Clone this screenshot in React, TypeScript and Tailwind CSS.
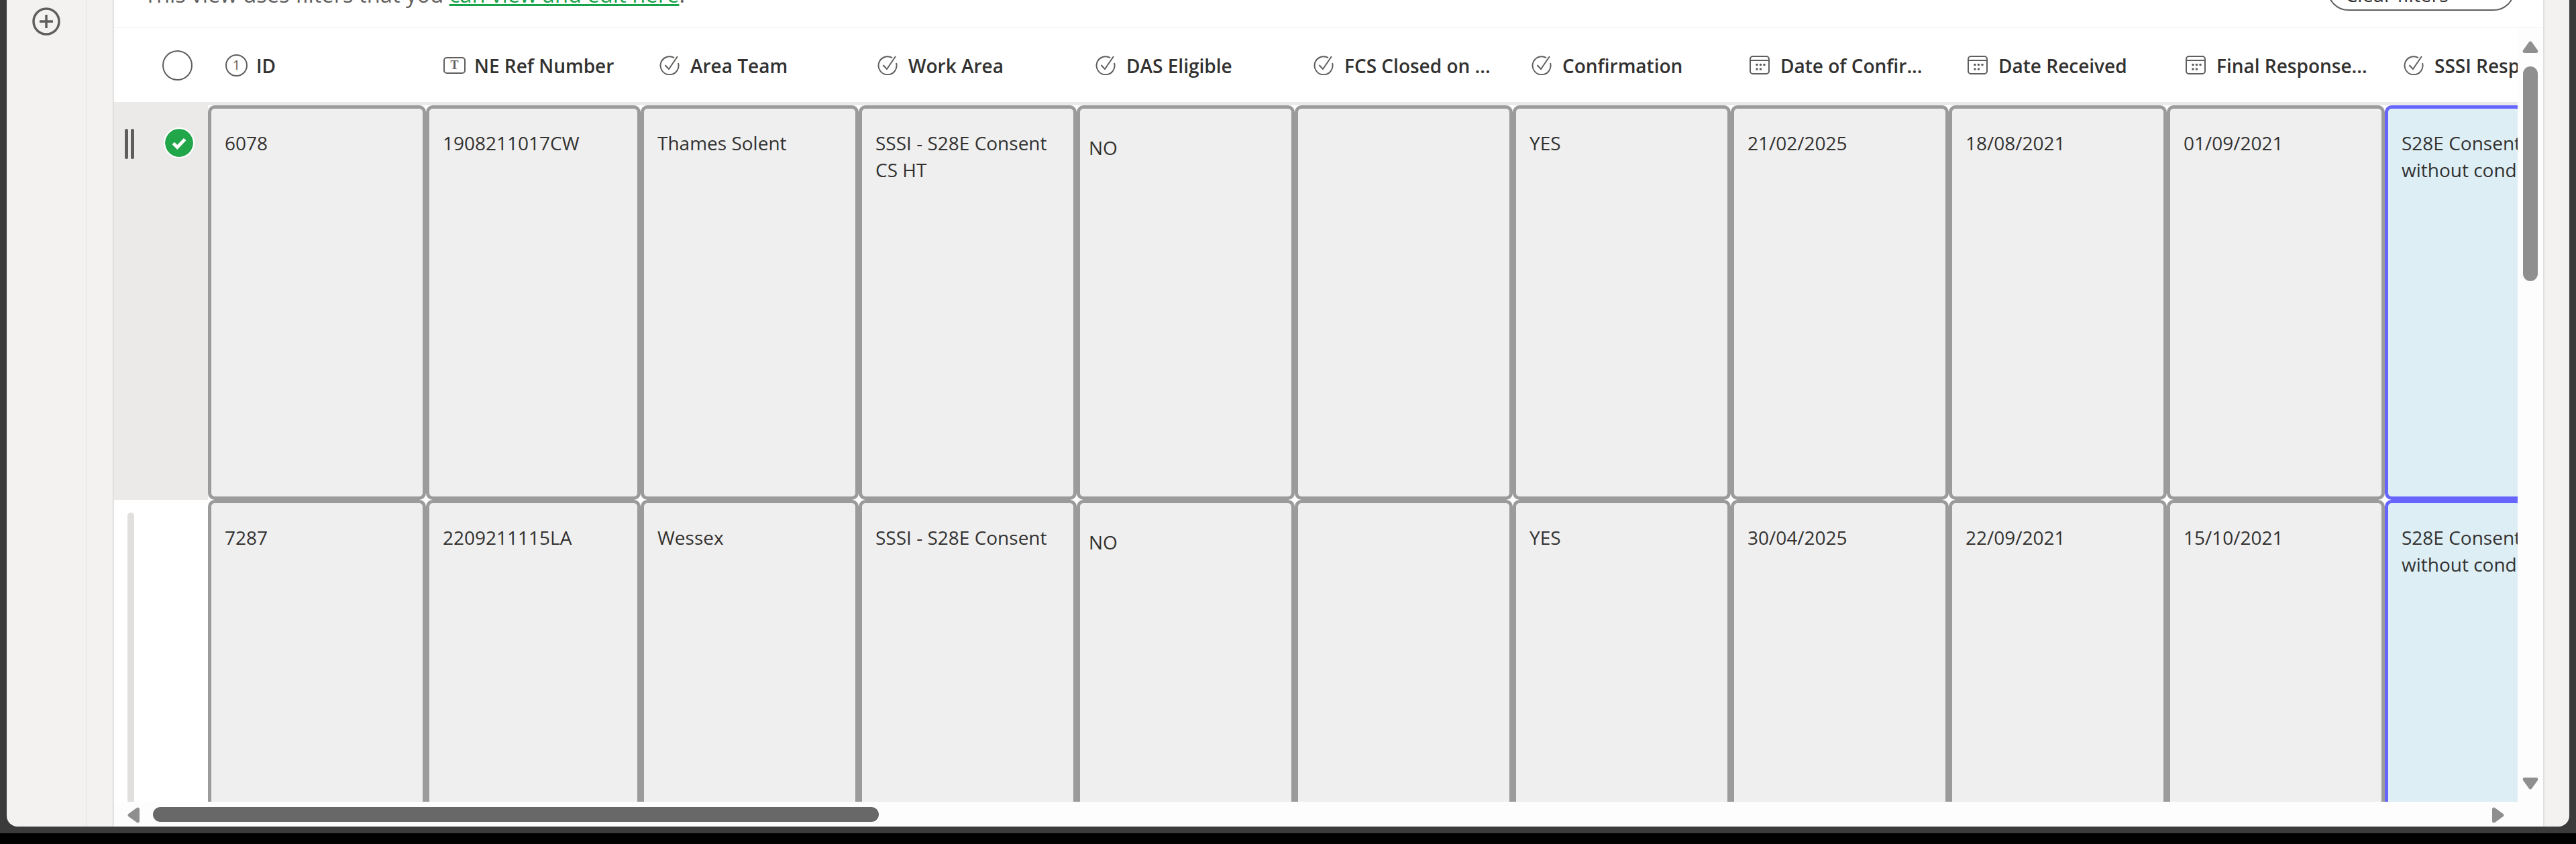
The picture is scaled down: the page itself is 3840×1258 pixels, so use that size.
const columns = [
  { label: "ID", icon: "number" },
  { label: "NE Ref Number", icon: "text" },
  { label: "Area Team", icon: "check" },
  { label: "Work Area", icon: "check" },
  { label: "DAS Eligible", icon: "check" },
  { label: "FCS Closed on ...", icon: "check" },
  { label: "Confirmation", icon: "check" },
  { label: "Date of Confir...", icon: "date" },
  { label: "Date Received", icon: "date" },
  { label: "Final Response...", icon: "date" },
  { label: "SSSI Response", icon: "check" },
];

const cellWidths = [
  "w-[325px]",
  "w-[320px]",
  "w-[325px]",
  "w-[325px]",
  "w-[325px]",
  "w-[325px]",
  "w-[325px]",
  "w-[325px]",
  "w-[325px]",
  "w-[325px]",
  "w-[325px]",
];

const rows = [
  ["6078", "1908211017CW", "Thames Solent", "SSSI - S28E Consent CS HT", "NO", "", "YES", "21/02/2025", "18/08/2021", "01/09/2021", "S28E Consent without conditions"],
  ["7287", "2209211115LA", "Wessex", "SSSI - S28E Consent", "NO", "", "YES", "30/04/2025", "22/09/2021", "15/10/2021", "S28E Consent without conditions"],
];

function ColumnIcon({ type }: { type: string }) {
  if (type === "number") {
    return (
      <span className="flex h-[33px] w-[33px] shrink-0 items-center justify-center rounded-full border-2 border-[#605e5c] text-[20px] font-normal leading-none text-[#605e5c]">
        1
      </span>
    );
  }
  if (type === "text") {
    return (
      <span className="flex h-[25px] w-[33px] shrink-0 items-center justify-center rounded-[5px] border-2 border-[#605e5c] font-['Liberation_Serif',serif] text-[18px] font-bold leading-none text-[#605e5c]">
        T
      </span>
    );
  }
  if (type === "date") {
    return (
      <svg viewBox="0 0 30 28" className="-ml-[3px] mr-[3px] h-[28px] w-[30px] shrink-0" fill="none" stroke="#605e5c" strokeWidth="2">
        <rect x="1" y="1" width="28" height="26" rx="4" />
        <path d="M1 7h28" />
        <g fill="#605e5c" stroke="none">
          <circle cx="11" cy="13.500" r="1.800" />
          <circle cx="16.500" cy="13.500" r="1.800" />
          <circle cx="22" cy="13.500" r="1.800" />
          <circle cx="11" cy="20" r="1.800" />
          <circle cx="16.500" cy="20" r="1.800" />
        </g>
      </svg>
    );
  }
  return (
    <svg viewBox="0 0 30 30" className="-ml-[3px] mr-[3px] h-[30px] w-[30px] shrink-0" fill="none" stroke="#605e5c" strokeWidth="2">
      <path d="M22 4.200A13.500 13.500 0 1 0 28 12" />
      <path d="M8.500 15l5.500 6L27 2" />
    </svg>
  );
}

function ArrowUp() {
  return (
    <svg viewBox="0 0 24 18" className="h-[18px] w-[24px]" fill="#8f8f8f">
      <path d="M10 1.500a2.500 2.500 0 0 1 4 0l9 12.500c1 1.500 0 4-2 4H3c-2 0-3-2.500-2-4z" />
    </svg>
  );
}

function ArrowDown() {
  return (
    <svg viewBox="0 0 24 18" className="h-[18px] w-[24px]" fill="#8f8f8f">
      <path d="M10 16.500a2.500 2.500 0 0 0 4 0l9-12.500c1-1.500 0-4-2-4H3C1 0 0 2.500 1 4z" />
    </svg>
  );
}

function ArrowLeft() {
  return (
    <svg viewBox="0 0 18 24" className="h-[24px] w-[18px]" fill="#8f8f8f">
      <path d="M1.500 10a2.500 2.500 0 0 0 0 4l12.500 9c1.500 1 4 0 4-2V3c0-2-2.500-3-4-2z" />
    </svg>
  );
}

function ArrowRight() {
  return (
    <svg viewBox="0 0 18 24" className="h-[24px] w-[18px]" fill="#8f8f8f">
      <path d="M16.500 10a2.500 2.500 0 0 1 0 4L4 23c-1.500 1-4 0-4-2V3c0-2 2.500-3 4-2z" />
    </svg>
  );
}

function Cell({ value, col }: { value: string; col: number }) {
  const isLast = col === 10;
  return (
    <div className={`${cellWidths[col]} h-full shrink-0 bg-white`}>
      <div
        className={`h-full rounded-[10px] border-[5px] ${
          isLast ? "border-[#6666ff] bg-[#ddeef5]" : "border-[#9b9b9b] bg-[#efefef]"
        } ${col === 4 ? "pl-[13px] pt-[38px]" : "pl-[20px] pt-[31px]"} pr-[14px] text-[28px] leading-[40px] text-[#323130]`}
      >
        {value}
      </div>
    </div>
  );
}

export default function App() {
  return (
    <div className="h-[1258px] w-[3840px] overflow-hidden bg-black font-['Open_Sans',sans-serif]">
      <div className="h-[1242px] bg-[#3b3b3b] px-[10px] pb-[10px]">
        <div className="flex h-full overflow-hidden rounded-b-[16px] bg-[#f3f2f1]">
          {/* Left rail */}
          <div className="flex w-[120px] shrink-0 justify-center border-r-2 border-[#ebeae9] pt-[11px]">
            <svg viewBox="0 0 42 42" className="h-[42px] w-[42px]" fill="none" stroke="#605e5c" strokeWidth="3.500">
              <circle cx="21" cy="21" r="19" />
              <path d="M21 11v20M11 21h20" />
            </svg>
          </div>
          <div className="w-[40px] shrink-0" />

          {/* Main panel */}
          <div className="flex w-[3621px] shrink-0 flex-col overflow-hidden bg-white shadow-[0_0_4px_rgba(0,0,0,0.2)]">
            {/* Filter message, scrolled mostly out of view */}
            <div className="h-[42px] shrink-0 overflow-hidden border-b-2 border-[#f8f8f8]">
              <div className="-mt-[48px] flex items-start justify-between pl-[45px] pr-[42px]">
                <div className="mt-[20px] text-[32.700px] leading-[40px] text-[#605e5c]">
                  This view uses filters that you{" "}
                  <span className="text-[#17a34a] underline decoration-[3px] underline-offset-[2px] [text-decoration-skip-ink:none]">
                    can view and edit here
                  </span>
                  .
                </div>
                <div className="flex h-[64px] w-[280px] items-center rounded-[32px] border-2 border-[#605e5c] pl-[25px] pt-[15px] text-[29px] text-[#323130]">
                  Clear filters
                </div>
              </div>
            </div>

            <div className="flex min-h-0 flex-1">
              <div className="min-w-0 flex-1 overflow-hidden">
                {/* Header */}
                <div className="flex h-[110px] w-[3800px] items-center">
                  <div className="flex w-[140px] shrink-0 justify-end pr-[23px]">
                    <span className="h-[45px] w-[45px] rounded-full border-2 border-[#605e5c]" />
                  </div>
                  {columns.map((col) => (
                    <div key={col.label} className="flex w-[325px] shrink-0 items-center gap-[13px] pl-[26px]">
                      <ColumnIcon type={col.icon} />
                      <span className="mt-[1px] whitespace-nowrap text-[28px] font-semibold text-[#323130]">{col.label}</span>
                    </div>
                  ))}
                </div>

                {/* Row 1 */}
                <div className="flex h-[593px] w-[3800px] bg-[#ebeae9] pt-[5px]">
                  <div className="flex w-[140px] shrink-0 items-start pt-[35px]">
                    <div className="ml-[16px] flex gap-[4px]">
                      <span className="h-[45px] w-[5px] rounded-full bg-[#605e5c]" />
                      <span className="h-[45px] w-[5px] rounded-full bg-[#605e5c]" />
                    </div>
                    <div className="ml-[46px] flex h-[42px] w-[42px] items-center justify-center rounded-full bg-[#21a649] outline-2 outline-white">
                      <svg viewBox="0 0 24 24" className="h-[26px] w-[26px]" fill="none" stroke="white" strokeWidth="4.500">
                        <path d="M4 12.500l5.500 5.500L20 7" />
                      </svg>
                    </div>
                  </div>
                  {rows[0].map((value, i) => (
                    <Cell key={i} value={value} col={i} />
                  ))}
                </div>

                {/* Row 2 */}
                <div className="flex h-[600px] w-[3800px] bg-white">
                  <div className="w-[140px] shrink-0 pl-[20px] pt-[19px]">
                    <span className="block h-full w-[10px] rounded-t-[5px] bg-[#e1dfdd]" />
                  </div>
                  {rows[1].map((value, i) => (
                    <Cell key={i} value={value} col={i} />
                  ))}
                </div>
              </div>

              {/* Vertical scrollbar */}
              <div className="flex w-[38px] shrink-0 flex-col items-center bg-[#fdfdfd] pb-[18px] pt-[19px]">
                <ArrowUp />
                <div className="mt-[20px] h-[320px] w-[22px] rounded-full bg-[#8f8f8f]" />
                <div className="flex-1" />
                <ArrowDown />
              </div>
            </div>

            {/* Horizontal scrollbar */}
            <div className="flex h-[37px] shrink-0 items-start bg-[#fdfdfd] pl-[20px] pr-[58px] pt-[8px]">
              <ArrowLeft />
              <div className="ml-[20px] h-[22px] w-[1082px] rounded-full bg-[#686868]" />
              <div className="flex-1" />
              <ArrowRight />
            </div>
          </div>
        </div>
      </div>
    </div>
  );
}
